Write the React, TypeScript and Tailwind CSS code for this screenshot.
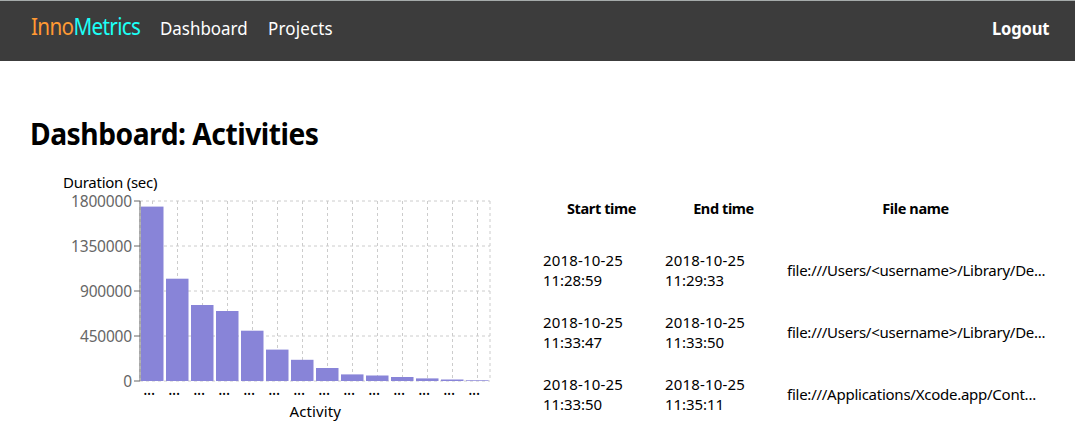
const bars = [206.6, 278.7, 305, 311, 330.7, 349.6, 359.8, 368, 374.4, 375.5, 377, 378.4, 379.5, 380.3];

const ticks = [
  { label: "1800000", y: 201, width: 61 },
  { label: "1350000", y: 246, width: 61 },
  { label: "900000", y: 291, width: 52 },
  { label: "450000", y: 336, width: 52 },
  { label: "0", y: 381, width: 8.5 },
];

const rows = [
  { start: "11:28:59", end: "11:29:33", file: "file:///Users/<username>/Library/De..." },
  { start: "11:33:47", end: "11:33:50", file: "file:///Users/<username>/Library/De..." },
  { start: "11:33:50", end: "11:35:11", file: "file:///Applications/Xcode.app/Cont..." },
];

function Header() {
  return (
    <header className="flex h-[61px] items-start border-t border-[#a5abaa] bg-[#3c3c3c] pl-[31px] pr-[26px] text-white">
      <div className="mt-[7px] w-[129px] origin-left scale-x-[0.9] whitespace-nowrap text-[23px] leading-9 tracking-[-0.75px]">
        <span className="text-[#ff9933]">Inno</span>
        <span className="text-[#1cfff6]">Metrics</span>
      </div>
      <nav className="mt-[11px] flex flex-1 text-[18px] leading-8">
        <a className="w-[108px] origin-left scale-x-[0.94]">Dashboard</a>
        <a className="origin-left scale-x-[0.94] tracking-[0.2px]">Projects</a>
      </nav>
      <a className="mt-[11px] origin-right scale-x-[0.92] text-[18px] font-bold leading-8 tracking-[-0.2px]">Logout</a>
    </header>
  );
}

function ActivityChart() {
  return (
    <svg className="block flex-none" width="470" height="260" viewBox="30 170 470 260" fontSize="15.5">
      <g stroke="#ccc" strokeDasharray="3 3" fill="none">
        {ticks.map((t) => (
          <line key={t.y} x1="140" x2="490" y1={t.y} y2={t.y} />
        ))}
        {bars.map((_, i) => (
          <line key={i} x1={152.5 + i * 25} x2={152.5 + i * 25} y1="201" y2="381" />
        ))}
        <line x1="140" x2="140" y1="201" y2="381" />
        <line x1="490" x2="490" y1="201" y2="381" />
      </g>
      <g stroke="#666">
        <line x1="140" x2="140" y1="201" y2="381" />
        {ticks.map((t) => (
          <line key={t.y} x1="134" x2="140" y1={t.y} y2={t.y} />
        ))}
      </g>
      <g fill="#8884d8">
        {bars.map((top, i) => (
          <rect key={i} x={141 + i * 25} y={top} width="22.5" height={381 - top} />
        ))}
      </g>
      <g fill="#666" textAnchor="end">
        {ticks.map((t) => (
          <text key={t.y} x="132" y={t.y + 6} textLength={t.width}>{t.label}</text>
        ))}
      </g>
      {bars.map((_, i) => (
        <text key={i} x={143.2 + i * 25} y="395" textLength="12">...</text>
      ))}
      <text x="63" y="188" fontSize="15" textLength="94.5">Duration (sec)</text>
      <text x="289.5" y="417" fontSize="15" textLength="51.5">Activity</text>
    </svg>
  );
}

function ActivityTable() {
  return (
    <table className="ml-[40px] mt-[7px] w-[496px] table-fixed border-collapse text-[15px] leading-5">
      <colgroup>
        <col className="w-[122px]" />
        <col className="w-[122px]" />
        <col />
      </colgroup>
      <thead>
        <tr className="h-[62px] text-[14.5px] tracking-[-0.4px]">
          <th className="pl-px">Start time</th>
          <th className="pl-px">End time</th>
          <th className="pl-[19px] pr-2">File name</th>
        </tr>
      </thead>
      <tbody>
        {rows.map((r) => (
          <tr key={r.start} className="h-[62px]">
            <td className="pl-[3px] tracking-[0.18px]">2018-10-25<br /><span className="tracking-[-0.05px]">{r.start}</span></td>
            <td className="pl-[3px] tracking-[0.18px]">2018-10-25<br /><span className="tracking-[-0.05px]">{r.end}</span></td>
            <td className="whitespace-nowrap pl-[3px] tracking-[-0.25px]">{r.file}</td>
          </tr>
        ))}
      </tbody>
    </table>
  );
}

export default function App() {
  return (
    <div className="h-[439px] overflow-hidden bg-white font-['Noto_Sans',sans-serif] text-black">
      <Header />
      <main className="px-[30px] pt-[52px]">
        <h1 className="h-[57px] origin-left scale-x-[0.94] text-[30px] font-bold leading-[42px] tracking-[-0.5px]">Dashboard: Activities</h1>
        <div className="flex items-start">
          <ActivityChart />
          <div className="flex-none"><ActivityTable /></div>
        </div>
      </main>
    </div>
  );
}
